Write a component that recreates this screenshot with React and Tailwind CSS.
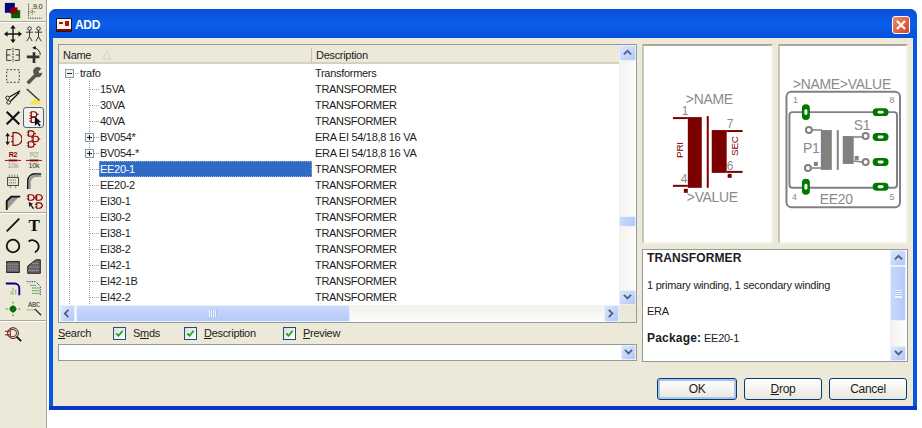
import React from "react";

// petites icones de la barre d'outils (viewBox 20x20)
const Ico = ({ children }) => (
  <svg viewBox="0 0 20 20" className="w-[18px] h-[18px]" fill="none">{children}</svg>
);

const gate = (x, y, c) => (
  <path d={`M${x} ${y}h3a3 3 0 0 1 0 6h-3zM${x - 2} ${y + 1.5}h2M${x - 2} ${y + 4.5}h2M${x + 6} ${y + 3}h2`} stroke={c} strokeWidth="1.2" fill="none" />
);

const toolsTop = [
  <Ico><rect x="1" y="1" width="11" height="11" fill="#000080" /><rect x="8" y="9" width="10" height="9" fill="#006400" /><rect x="7" y="6" width="8" height="7" fill="#8b0000" /></Ico>,
  <Ico><path d="M4 2v16h15" stroke="#333" strokeDasharray="1.5 1" /><path d="M4 11h7M8 7v8" stroke="#333" strokeDasharray="1 1" /><text x="9" y="8" fontSize="8" fill="#222" fontFamily="Liberation Sans">9.0</text></Ico>,
];

const tools = [
  <Ico><path d="M10 2v16M2 10h16" stroke="#111" strokeWidth="1.5" /><path d="M10 0l3 4H7zM10 20l3-4H7zM0 10l4-3v6zM20 10l-4-3v6z" fill="#111" /></Ico>,
  <Ico><g stroke="#222"><circle cx="5" cy="4" r="2" /><circle cx="15" cy="4" r="2" /><path d="M5 6v7M1 8h8M5 13l-3 5M5 13l3 5M15 6v7M11 8h8M15 13l-3 5M15 13l3 5" /></g></Ico>,
  <Ico><path d="M8 4H3v12h5M3 10h4M12 4h5v12h-5M17 10h-4" stroke="#222" /><path d="M10 2v16" stroke="#222" strokeDasharray="2 1" /></Ico>,
  <Ico><path d="M10 7v12M2 12h14" stroke="#333" strokeWidth="3" /><path d="M9 2a8 8 0 0 1 8 8" stroke="#111" /><path d="M8 2l4-2v4z" fill="#111" /></Ico>,
  <Ico><rect x="3" y="3" width="14" height="14" stroke="#222" strokeDasharray="2 2" /></Ico>,
  <Ico><path d="M3 18l9-9" stroke="#555" strokeWidth="4" /><path d="M10 8a5 5 0 0 1 8-6l-3 3 1 2 3-1a5 5 0 0 1-7 5z" fill="#555" /></Ico>,
  <Ico><circle cx="4" cy="11" r="2" stroke="#111" /><circle cx="5" cy="16" r="2" stroke="#111" /><path d="M6 10L18 3M7 15L17 5" stroke="#111" strokeWidth="1.4" /></Ico>,
  <Ico><path d="M2 1l14 13" stroke="#333" strokeWidth="1.5" /><path d="M5 18l7-7 7 7z" fill="#f5e642" /></Ico>,
  <Ico><path d="M3 3l14 14M17 3L3 17" stroke="#111" strokeWidth="2.4" /></Ico>,
  <Ico>{gate(7, 3, "#8b0000")}{gate(7, 9, "#8b0000")}<path d="M11 9v10l2.500-2.500 2.500 3 1.500-1.500-2.500-3 3-.5z" fill="#111" /></Ico>,
  <Ico><path d="M4 5v10" stroke="#111" /><path d="M4 3l2.500 4h-5zM4 17l2.500-4h-5z" fill="#111" /><path d="M10 3h3a7 7 0 0 1 0 14h-3zM8 7h2M8 13h2" stroke="#8b0000" strokeWidth="1.3" /></Ico>,
  <Ico>{gate(4, 1, "#8b0000")}{gate(9, 7, "#8b0000")}{gate(4, 13, "#8b0000")}</Ico>,
  <Ico><text x="10" y="7" fontSize="8" fontWeight="bold" textAnchor="middle" fill="#8b0000" fontFamily="Liberation Sans">R2</text><path d="M1 10.500h4M15 10.500h4" stroke="#8b0000" /><rect x="5" y="9.500" width="10" height="2" fill="#8b0000" /><text x="10" y="19" fontSize="8" textAnchor="middle" fill="#999" fontFamily="Liberation Sans">10k</text></Ico>,
  <Ico><text x="10" y="7" fontSize="8" textAnchor="middle" fill="#999" fontFamily="Liberation Sans">R2</text><path d="M1 10.500h4M15 10.500h4" stroke="#8b0000" /><rect x="5" y="9.500" width="10" height="2" fill="#8b0000" /><text x="10" y="19" fontSize="8" textAnchor="middle" fill="#333" fontFamily="Liberation Sans">10k</text></Ico>,
  <Ico><rect x="4" y="6" width="12" height="9" stroke="#333" /><path d="M6 3v3M9 3v3M12 3v3M15 3v3M7 15v3M13 15v3M6 9h8M6 12h8" stroke="#333" strokeDasharray="1 1" /></Ico>,
  <Ico><path d="M5 19V11a8 8 0 0 1 8-7h5" stroke="#999" strokeWidth="3" /><path d="M3 19V10a8 8 0 0 1 9-8h6" stroke="#111" strokeWidth="1.5" /></Ico>,
  <Ico><path d="M3 19L17 4H7L3 8z" fill="#999" /><path d="M3 19V9l5-5h10" stroke="#111" strokeWidth="2" /></Ico>,
  <Ico>{gate(4, 2, "#8b0000")}{gate(13, 2, "#8b0000")}{gate(13, 11, "#8b0000")}<path d="M4 10l5 2-2 1 3 4-1 1-3-4-1 2z" fill="#111" /></Ico>,
];

const toolsDraw = [
  <Ico><path d="M3 17L17 3" stroke="#111" strokeWidth="2" /></Ico>,
  <Ico><text x="10" y="17" fontSize="19" fontWeight="bold" textAnchor="middle" fill="#111" fontFamily="Liberation Serif">T</text></Ico>,
  <Ico><circle cx="10" cy="10" r="7" stroke="#111" strokeWidth="2" /></Ico>,
  <Ico><path d="M4 5a7 7 0 1 1 7 12" stroke="#111" strokeWidth="2" /></Ico>,
  <Ico><rect x="3" y="4" width="14" height="12" fill="#666" stroke="#111" /><path d="M3 7h14M3 10h14M3 13h14" stroke="#aaa" strokeDasharray="1 1" /></Ico>,
  <Ico><path d="M3 17V9l9-7h5v15z" fill="#666" stroke="#111" /><path d="M4 14h12M5 10h11M8 6h8" stroke="#bbb" strokeDasharray="1 1" /></Ico>,
  <Ico><path d="M2 5h10a5 5 0 0 1 5 5v8" stroke="#000080" strokeWidth="2" /><path d="M10 10v8M13 12v6M8 14v4" stroke="#0a8a0a" strokeDasharray="1 1" /></Ico>,
  <Ico><path d="M6 7h7M8 10h8M8 13h8M8 16h8" stroke="#0a8a0a" strokeDasharray="1.500 .8" /><path d="M2 3h10l5 5v10" stroke="#000080" strokeDasharray="1 1" /></Ico>,
  <Ico><path d="M2 10h16M10 2v16" stroke="#0a8a0a" strokeDasharray="2 1.500" /><circle cx="10" cy="10" r="3.500" fill="#0a6a0a" /></Ico>,
  <Ico><text x="10" y="8" fontSize="8" textAnchor="middle" fill="#333" fontFamily="Liberation Mono">ABC</text><path d="M2 11h10" stroke="#0a8a0a" strokeDasharray="1 1" /><path d="M11 10l7 7" stroke="#333" strokeWidth="1.500" /></Ico>,
];

const ercTool = (
  <Ico><circle cx="10" cy="9" r="6" stroke="#111" /><path d="M7 5v8h3a4 4 0 0 0 0-8zM1 7h6M1 11h6" stroke="#8b0000" /><path d="M14 13l5 5" stroke="#111" strokeWidth="2" /></Ico>
);

const Tool = ({ icon, active }) => (
  <div className={`h-[21px] flex items-center justify-center ${active ? "border border-[#4d6185] rounded-[3px] bg-[#f2f2ec]" : ""}`}>
    {icon}
  </div>
);

const ToolSep = () => <div className="h-[2px] border-t border-[#aca899] bg-white" />;

const Toolbar = () => (
  <div className="w-[47px] h-[428px] shrink-0 bg-[#ece9d8] border-r border-[#a5a39a]">
    <div className="grid grid-cols-[21px_21px] pl-[2px]">
      {toolsTop.map((t, i) => <Tool key={i} icon={t} />)}
    </div>
    <ToolSep />
    <div className="grid grid-cols-[21px_21px] pl-[2px]">
      {tools.map((t, i) => <Tool key={i} icon={t} active={i === 9} />)}
    </div>
    <ToolSep />
    <div className="grid grid-cols-[21px_21px] pl-[2px]">
      {toolsDraw.map((t, i) => <Tool key={i} icon={t} />)}
    </div>
    <div className="h-[1px]" />
    <ToolSep />
    <div className="pl-[2px] pt-[1px] grid grid-cols-[21px_21px]">
      <Tool icon={ercTool} />
    </div>
  </div>
);

const Arrow = ({ dir }) => {
  const d = {
    up: "M1 6l4-4 4 4",
    down: "M1 2l4 4 4-4",
    left: "M6 1L2 5l4 4",
    right: "M2 1l4 4-4 4",
  }[dir];
  return (
    <svg viewBox="0 0 10 10" className="w-[9px] h-[9px]" fill="none">
      <path d={d} stroke="#4d6185" strokeWidth="2" />
    </svg>
  );
};

const ScrollBtn = ({ dir, cls }) => (
  <div className={`bg-gradient-to-br from-[#dbe6fd] to-[#b4c8f6] border border-[#e8effd] rounded-[2px] flex items-center justify-center ${cls}`}>
    <Arrow dir={dir} />
  </div>
);

const Grip = ({ vertical }) => (
  <div className={vertical ? "w-[7px] h-[8px] border-y border-[#eef3fe] bg-[repeating-linear-gradient(0deg,#eef3fe_0,#eef3fe_1px,#aebff0_1px,#aebff0_2px)]" : "h-[7px] w-[8px] bg-[repeating-linear-gradient(90deg,#eef3fe_0,#eef3fe_1px,#aebff0_1px,#aebff0_2px)]"} />
);

const TreeGuide = ({ kind }) => {
  if (kind === "root") {
    return (
      <svg width="21" height="16" className="shrink-0">
        <path d="M10.5 12v4M14 8.5h6" stroke="#a0a0a0" strokeDasharray="1 1" />
        <rect x="6.5" y="4.5" width="8" height="8" fill="#f4f3ee" stroke="#8a9bb0" />
        <path d="M8 8.5h5" stroke="#222" />
      </svg>
    );
  }
  return (
    <svg width="40" height="16" className="shrink-0">
      <path d="M10.5 0v16M30.5 0v16M31 8.5h9" stroke="#a0a0a0" strokeDasharray="1 1" />
      {kind === "plus" && (
        <>
          <rect x="26.5" y="4.5" width="8" height="8" fill="#f4f3ee" stroke="#8a9bb0" />
          <path d="M28 8.5h5M30.5 6v5" stroke="#222" />
        </>
      )}
    </svg>
  );
};

const rows = [
  ["15VA", "TRANSFORMER"],
  ["30VA", "TRANSFORMER"],
  ["40VA", "TRANSFORMER"],
  ["BV054*", "ERA EI 54/18,8 16 VA", "plus"],
  ["BV054-*", "ERA EI 54/18,8 16 VA", "plus"],
  ["EE20-1", "TRANSFORMER", "line", true],
  ["EE20-2", "TRANSFORMER"],
  ["EI30-1", "TRANSFORMER"],
  ["EI30-2", "TRANSFORMER"],
  ["EI38-1", "TRANSFORMER"],
  ["EI38-2", "TRANSFORMER"],
  ["EI42-1", "TRANSFORMER"],
  ["EI42-1B", "TRANSFORMER"],
  ["EI42-2", "TRANSFORMER"],
];

const TreePanel = () => (
  <div className="h-[279px] border border-[#919b9c] bg-white grid grid-cols-[1fr_17px] grid-rows-[1fr_17px]">
    <div className="min-w-0">
      <div className="h-[19px] bg-[#ece9d8] border-b-2 border-[#d6d2c2] flex items-center pt-[3px]">
        <div className="w-[253px] h-full flex items-center pl-[4px] border-r border-[#c7c5b2]">
          Name
          <svg width="10" height="10" className="ml-[11px]"><path d="M5 1L1 9h8z" fill="none" stroke="#d8d5c5" /></svg>
        </div>
        <div className="pl-[4px]">Description</div>
      </div>
      <div className="pt-[1px]">
        <div className="h-[16px] flex items-center">
          <TreeGuide kind="root" />
          <span className="w-[232px]">trafo</span>
          <span className="pl-[3px]">Transformers</span>
        </div>
        {rows.map(([name, desc, kind, sel]) => (
          <div key={name} className="h-[16px] flex items-center">
            <TreeGuide kind={kind || "line"} />
            <span className={`w-[213px] h-[16px] leading-[16px] pl-[1px] ${sel ? "bg-[#316ac5] text-white outline-1 -outline-offset-1 outline-dotted outline-[#8fa9d8]" : ""}`}>{name}</span>
            <span className="pl-[3px]">{desc}</span>
          </div>
        ))}
      </div>
    </div>

    <div className="bg-gradient-to-r from-[#f3f1ec] to-[#fdfdfb] flex flex-col">
      <ScrollBtn dir="up" cls="h-[16px] shrink-0" />
      <div className="h-[155px]" />
      <div className="h-[11px] rounded-[2px] bg-gradient-to-r from-[#c9d8fc] to-[#b6caf6] border border-[#e8effd]" />
      <div className="flex-1" />
      <ScrollBtn dir="down" cls="h-[15px] shrink-0" />
    </div>

    <div className="flex items-stretch bg-gradient-to-b from-[#f3f1ec] to-[#fdfdfb] pl-[1px]">
      <ScrollBtn dir="left" cls="w-[15px] shrink-0" />
      <div className="w-[274px] ml-[1px] rounded-[2px] bg-gradient-to-b from-[#c9d8fc] to-[#b6caf6] border border-[#e8effd] flex items-center justify-center">
        <Grip />
      </div>
      <div className="flex-1" />
      <ScrollBtn dir="right" cls="w-[15px] shrink-0" />
    </div>
    <div className="bg-[#ece9d8]" />
  </div>
);

const Check = ({ cls, children }) => (
  <div className={`flex items-center ${cls}`}>
    <div className="w-[13px] h-[13px] border border-[#1c5180] bg-gradient-to-br from-[#dcdcd7] to-white flex items-center justify-center">
      <svg viewBox="0 0 10 10" className="w-[9px] h-[9px]"><path d="M1.5 5l2.500 2.500L8.500 2" fill="none" stroke="#21a121" strokeWidth="2" /></svg>
    </div>
    <span className="ml-[7px]">{children}</span>
  </div>
);

const SearchRow = () => (
  <div className="h-[21px] flex items-center">
    <span className="w-[55px]"><u>S</u>earch</span>
    <Check cls="w-[71px]">S<u>m</u>ds</Check>
    <Check cls="w-[99px]"><u>D</u>escription</Check>
    <Check cls=""><u>P</u>review</Check>
  </div>
);

const Combo = () => (
  <div className="h-[17px] border border-[#919b9c] bg-white flex justify-end items-stretch">
    <ScrollBtn dir="down" cls="w-[15px]" />
  </div>
);

const symText = "font-['Liberation_Sans',sans-serif]";

const SymbolPreview = () => (
  <svg viewBox="644 47 127 196" className="w-full h-full">
    <g fill="#8a8a8a" fontSize="14" className={symText}>
      <text x="686" y="105">&gt;NAME</text>
      <text x="687" y="203">&gt;VALUE</text>
      <text x="682" y="116" fontSize="12">1</text>
      <text x="681" y="184" fontSize="12">4</text>
      <text x="727" y="129" fontSize="12">7</text>
      <text x="727" y="171" fontSize="12">6</text>
    </g>
    <g fill="#7b0000">
      <rect x="688" y="118" width="14" height="71" />
      <rect x="673" y="118" width="15" height="2" />
      <rect x="673" y="186" width="15" height="2" />
      <rect x="707" y="117" width="2" height="72" />
      <rect x="712" y="131" width="15" height="43" />
      <rect x="727" y="131" width="16" height="2" />
      <rect x="727" y="172" width="16" height="2" />
      <rect x="684" y="190" width="4" height="4" />
      <rect x="728" y="175" width="4" height="4" />
      <text transform="translate(683 159) rotate(-90)" fontSize="10" className={symText}>PRI</text>
      <text transform="translate(738 157) rotate(-90)" fontSize="10" className={symText}>SEC</text>
    </g>
  </svg>
);

const Pad = ({ x, y, v }) => (
  <g>
    <rect x={v ? x - 4 : x - 8} y={v ? y - 8 : y - 4} width={v ? 8 : 16} height={v ? 16 : 8} rx="4" fill="#007800" />
    <rect x={v ? x - 1.5 : x - 3} y={v ? y - 3 : y - 1.5} width={v ? 3 : 6} height={v ? 6 : 3} rx="1.5" fill="#fff" />
  </g>
);

const PackagePreview = () => (
  <svg viewBox="780 47 127 196" className="w-full h-full">
    <g fill="none" stroke="#808080">
      <rect x="786.5" y="92.5" width="114" height="116" rx="5" strokeWidth="2" />
      <rect x="789.5" y="113" width="108" height="76" rx="3" strokeWidth="2" />
      <circle cx="809" cy="131" r="3" strokeWidth="2" />
      <circle cx="808" cy="169" r="3" strokeWidth="2" />
      <circle cx="866" cy="137" r="3" strokeWidth="2" />
      <circle cx="866" cy="163" r="3" strokeWidth="2" />
      <path d="M812 131h10M811 169h11M854 138h9M854 162l9 1" strokeWidth="1.5" />
      <path d="M838 131v40" strokeWidth="2" />
    </g>
    <rect x="821" y="131" width="11" height="40" fill="#808080" />
    <rect x="843" y="137" width="11" height="28" fill="#808080" />
    <rect x="814" y="163" width="4" height="4" fill="#808080" />
    <rect x="855" y="157" width="4" height="4" fill="#808080" />
    <Pad x={806} y={113} v />
    <Pad x={806} y={188} v />
    <Pad x={881} y={113} />
    <Pad x={881} y={138} />
    <Pad x={881} y={163} />
    <Pad x={881} y={188} />
    <g fill="#8a8a8a" fontSize="14" className={symText}>
      <text x="793" y="90">&gt;NAME&gt;VALUE</text>
      <text x="803" y="154">P1</text>
      <text x="854" y="131">S1</text>
      <text x="820" y="205">EE20</text>
      <text x="793" y="104" fontSize="9">1</text>
      <text x="890" y="104" fontSize="9">8</text>
      <text x="792" y="201" fontSize="9">4</text>
      <text x="890" y="201" fontSize="9">5</text>
    </g>
  </svg>
);

const PreviewBox = ({ children }) => (
  <div className="w-[131px] h-[200px] bg-white border-2 border-t-[#aca899] border-l-[#c9c6b4] border-r-[#f4f3ea] border-b-[#f4f3ea]">
    {children}
  </div>
);

const DescBox = () => (
  <div className="h-[113px] border border-[#919b9c] bg-white flex">
    <div className="flex-1 pl-[4px]">
      <div className="font-bold text-[12px] tracking-[0.1px] h-[17px] leading-[17px]">TRANSFORMER</div>
      <div className="mt-[10px] h-[16px] leading-[16px] tracking-[-0.25px]">1 primary winding, 1 secondary winding</div>
      <div className="mt-[10px] h-[16px] leading-[16px]">ERA</div>
      <div className="mt-[11px] h-[16px] leading-[16px]"><b className="text-[12px] tracking-[0.2px]">Package:</b> EE20-1</div>
    </div>
    <div className="w-[16px] bg-gradient-to-r from-[#f3f1ec] to-[#fdfdfb] flex flex-col mr-[1px]">
      <ScrollBtn dir="up" cls="h-[16px] shrink-0" />
      <div className="h-[55px] rounded-[2px] bg-gradient-to-r from-[#c9d8fc] to-[#b6caf6] border border-[#e8effd] flex items-center justify-center"><Grip vertical /></div>
      <div className="flex-1" />
      <ScrollBtn dir="down" cls="h-[15px] shrink-0" />
    </div>
  </div>
);

const Btn = ({ children, def, cls }) => (
  <div className={`h-[22px] rounded-[3px] border border-[#003c74] bg-gradient-to-b from-white to-[#e9e7dd] flex items-center justify-center text-[12px] ${def ? "shadow-[inset_0_0_0_2px_#a9c3ea]" : ""} ${cls}`}>
    {children}
  </div>
);

const Dialog = () => (
  <div className="mt-[9px] ml-[2px] w-[868px] h-[401px] rounded-t-[7px] bg-[#0858e6] flex flex-col">
    <div className="h-[29px] shrink-0 rounded-t-[7px] bg-gradient-to-b from-[#0a4fd8] via-[#0a5ee9] to-[#0450dc] flex items-center px-[7px] pt-[3px]">
      <svg width="16" height="14" viewBox="0 0 16 14" className="shrink-0">
        <rect x="0" y="0" width="16" height="14" fill="#1a1a1a" />
        <rect x="1" y="1" width="14" height="10" fill="#f4f2ea" />
        <path d="M3 4h4v2H3zM9 3h4v5H9z" fill="#b01010" />
        <rect x="1" y="11" width="14" height="2" fill="#8b0000" />
      </svg>
      <span className="ml-[3px] text-white font-bold text-[12px]">ADD</span>
      <div className="ml-auto w-[18px] h-[18px] rounded-[3px] border border-white bg-gradient-to-br from-[#ee8a66] to-[#d4401c] flex items-center justify-center">
        <svg width="12" height="12" viewBox="0 0 12 12"><path d="M2 2l8 8M10 2l-8 8" stroke="#fff" strokeWidth="2.2" /></svg>
      </div>
    </div>
    <div className="flex-1 mx-[4px] bg-[#ece9d8] px-[5px] pt-[6px]">
      <div className="flex gap-[5px]">
        <div className="w-[579px] shrink-0">
          <TreePanel />
          <SearchRow />
          <Combo />
        </div>
        <div className="w-[266px] shrink-0">
          <div className="flex gap-[5px]">
            <PreviewBox><SymbolPreview /></PreviewBox>
            <PreviewBox><PackagePreview /></PreviewBox>
          </div>
          <div className="mt-[5px]"><DescBox /></div>
        </div>
      </div>
      <div className="flex justify-end gap-[7px] pt-[16px] pr-[1px]">
        <Btn def cls="w-[80px]">OK</Btn>
        <Btn cls="w-[78px]"><span><u>D</u>rop</span></Btn>
        <Btn cls="w-[78px]">Cancel</Btn>
      </div>
    </div>
    <div className="h-[4px] shrink-0 bg-[#0a36c4]" />
  </div>
);

export default function App() {
  return (
    <div className="w-[922px] h-[428px] bg-white flex overflow-hidden text-[11px] text-[#1c1c1c] font-['Liberation_Sans',sans-serif] tracking-[-0.3px]">
      <Toolbar />
      <Dialog />
    </div>
  );
}
